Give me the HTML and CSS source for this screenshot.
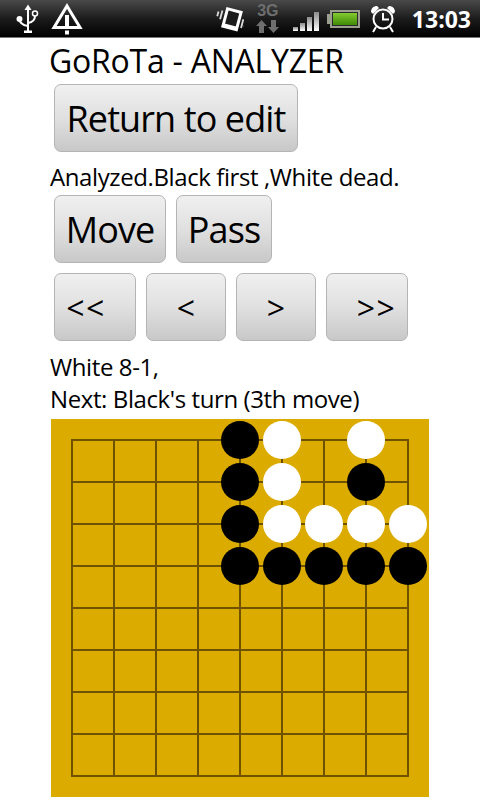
FILE: index.html
```html
<!DOCTYPE html>
<html lang="en">
<head>
    <meta charset="UTF-8">
    <meta name="viewport" content="width=device-width, initial-scale=1.0">
    <title>GoRoTa - ANALYZER</title>
    <link rel="stylesheet" href="styles.css">
</head>
<body>
    <div class="statusbar">
        <div class="status-left">
            <svg class="icon" width="24" height="30" viewBox="0 0 24 30">
                <g fill="none" stroke="#fff" stroke-width="2">
                    <path d="M13 4V27"/>
                    <path d="M13 22C7 21 4.500 19 4.500 15"/>
                    <path d="M13 19C18 18 20 16 20 12"/>
                </g>
                <path d="M13 0.500L16.500 6H9.500Z" fill="#fff"/>
                <rect x="9" y="26.500" width="8" height="2.500" fill="#fff"/>
                <circle cx="4.500" cy="15" r="3" fill="#fff"/>
                <circle cx="20" cy="9.500" r="2.500" fill="#222" stroke="#fff" stroke-width="1.500"/>
            </svg>
            <svg class="icon" width="32" height="32" viewBox="0 0 32 32">
                <path d="M16 3L29 24.500H3Z" fill="none" stroke="#fff" stroke-width="3"/>
                <rect x="14" y="12" width="4" height="14" fill="#fff"/>
                <rect x="14" y="27.500" width="4" height="4" fill="#fff"/>
            </svg>
        </div>
        <div class="status-right">
            <svg class="icon rotate-icon" width="28" height="30" viewBox="0 0 28 30">
                <g transform="rotate(15 15 15)">
                    <rect x="9" y="6" width="14" height="18" fill="#1c1c1c" stroke="#fff" stroke-width="3"/>
                    <rect x="9" y="21" width="14" height="3.500" fill="#fff"/>
                    <path d="M4.500 9V18M1 11V16M27 12V21M30 14V19" stroke="#ddd" stroke-width="1.800"/>
                </g>
            </svg>
            <div class="network">
                <span class="net-label">3G</span>
                <svg class="icon" width="23" height="13" viewBox="0 0 23 13">
                    <path d="M5.500 0L11 6H8V13H3V6H0Z M17.500 13L12 7H15V0H20V7H23Z" fill="#6e6e6e"/>
                </svg>
            </div>
            <div class="signal">
                <span class="signal-bar bar1"></span>
                <span class="signal-bar bar2"></span>
                <span class="signal-bar bar3"></span>
                <span class="signal-bar bar4"></span>
            </div>
            <div class="battery"><span class="battery-fill"></span></div>
            <svg class="icon alarm-icon" width="26" height="28" viewBox="0 0 26 28">
                <circle cx="13" cy="14" r="9.500" fill="none" stroke="#fff" stroke-width="2"/>
                <path d="M13 8V14.500H19" fill="none" stroke="#fff" stroke-width="2"/>
                <path d="M1 7C1 3 4 1 7 1L9 3L3 9Z M25 7C25 3 22 1 19 1L17 3L23 9Z" fill="#fff"/>
                <path d="M6 22L3 27M20 22L23 27" stroke="#fff" stroke-width="2"/>
            </svg>
            <span class="clock">13:03</span>
        </div>
    </div>

    <div id="main-section">
        <div class="app-title">GoRoTa - ANALYZER</div>
        <div class="button-row first-row">
            <button class="big-button return-button">Return to edit</button>
        </div>
        <div class="message result-info">Analyzed.Black first ,White dead.</div>
        <div class="button-row">
            <button class="big-button move-button">Move</button>
            <button class="big-button pass-button">Pass</button>
        </div>
        <div class="button-row nav-row">
            <button class="nav-button first-button">&lt;&lt;</button>
            <button class="nav-button prev-button">&lt;</button>
            <button class="nav-button next-button">&gt;</button>
            <button class="nav-button last-button">&gt;&gt;</button>
        </div>
        <div class="message move-info">White 8-1,</div>
        <div class="message turn-info">Next: Black's turn (3th move)</div>
        <svg id="board" width="378" height="378" viewBox="0 0 378 378"></svg>
    </div>

    <script>
        const board = document.getElementById('board');
        const cell = 42;
        const margin = 21;
        const black = [[4, 0], [4, 1], [4, 2], [4, 3], [5, 3], [6, 3], [7, 3], [8, 3], [7, 1]];
        const white = [[5, 0], [5, 1], [7, 0], [5, 2], [6, 2], [7, 2], [8, 2]];

        function drawStone(col, row, color) {
            const stone = document.createElementNS('http://www.w3.org/2000/svg', 'circle');
            stone.setAttribute('cx', margin + col * cell);
            stone.setAttribute('cy', margin + row * cell);
            stone.setAttribute('r', 19);
            stone.setAttribute('fill', color);
            board.appendChild(stone);
        }

        function drawLine(x1, y1, x2, y2) {
            const line = document.createElementNS('http://www.w3.org/2000/svg', 'line');
            line.setAttribute('x1', x1);
            line.setAttribute('y1', y1);
            line.setAttribute('x2', x2);
            line.setAttribute('y2', y2);
            line.setAttribute('class', 'grid-line');
            board.appendChild(line);
        }

        for (let i = 0; i < 9; i++) {
            const pos = margin + i * cell;
            drawLine(pos, margin - 1, pos, margin + 8 * cell + 1);
            drawLine(margin - 1, pos, margin + 8 * cell + 1, pos);
        }
        black.forEach(p => drawStone(p[0], p[1], '#000'));
        white.forEach(p => drawStone(p[0], p[1], '#fff'));
    </script>
</body>
</html>
```

FILE: styles.css
```css
* {
    box-sizing: border-box;
}
body {
    font-family: "Open Sans", "Noto Sans", sans-serif;
    margin: 0;
    width: 480px;
    height: 800px;
    overflow: hidden;
    background: #fff;
    color: #000;
}
.statusbar {
    height: 38px;
    background: linear-gradient(#4a4a4a, #1c1c1c 50%, #000);
    border-bottom: 1px solid #777;
    display: flex;
    justify-content: space-between;
    align-items: center;
    padding: 0 9px 0 15px;
}
.status-left, .status-right {
    display: flex;
    align-items: center;
}
.status-left {
    gap: 12px;
}
.icon {
    display: block;
}
.network {
    display: flex;
    flex-direction: column;
    align-items: center;
    gap: 3px;
    margin-left: 13px;
    width: 22px;
}
.net-label {
    color: #6e6e6e;
    font: bold 16px/13px "Liberation Sans", sans-serif;
}
.signal {
    display: flex;
    align-items: flex-end;
    gap: 2px;
    height: 19px;
    margin: 6px 0 0 14px;
}
.signal-bar {
    width: 5px;
    background: linear-gradient(#8a8a8a, #fff);
}
.bar1 { height: 4px; }
.bar2 { height: 8px; }
.bar3 { height: 14px; }
.bar4 { height: 19px; }
.battery {
    position: relative;
    width: 30px;
    height: 18px;
    margin-left: 11px;
    padding: 1px;
    border: 2px solid #9a9f90;
    background: #2a2a2a;
}
.battery::before {
    content: "";
    position: absolute;
    left: -5px;
    top: 2px;
    width: 3px;
    height: 10px;
    background: #9a9f90;
}
.battery-fill {
    display: block;
    height: 100%;
    background: linear-gradient(#84cc30, #3f8a06);
}
.alarm-icon {
    margin-left: 10px;
}
.clock {
    color: #fff;
    font: bold 23px "Open Sans", sans-serif;
    margin-left: 16px;
}
#main-section {
    padding-left: 50px;
}
.app-title {
    font-size: 32px;
    line-height: 46px;
    height: 44px;
    margin-left: -1px;
    letter-spacing: -0.24px;
}
.button-row {
    display: flex;
    gap: 10px;
    padding-left: 4px;
}
.first-row {
    margin-top: 2px;
}
.nav-row {
    margin-top: 10px;
}
button {
    font-family: inherit;
    color: #000;
    border: 1px solid #b4b4b4;
    border-radius: 7px;
    background: linear-gradient(#f0f0f0, #e0e0e0 50%, #c8c8c8);
    height: 68px;
    padding: 0;
}
.big-button {
    font-size: 36px;
    letter-spacing: -0.9px;
}
.nav-button {
    font-size: 32px;
}
.return-button { width: 244px; }
.move-button { width: 112px; }
.pass-button { width: 96px; }
.first-button {
    width: 82px;
    letter-spacing: 1.5px;
    padding-right: 18px;
}
.prev-button { width: 80px; }
.next-button { width: 80px; }
.last-button {
    width: 82px;
    letter-spacing: 1.5px;
    padding-left: 19px;
}
.message {
    font-size: 24px;
    line-height: 32px;
    letter-spacing: -0.4px;
}
.result-info {
    margin: 9px 0 2px;
}
.move-info {
    margin-top: 10px;
}
#board {
    display: block;
    margin-left: 1px;
    margin-top: 4px;
    background: #dbab00;
}
.grid-line {
    stroke: #6e5200;
    stroke-width: 2;
}
```
